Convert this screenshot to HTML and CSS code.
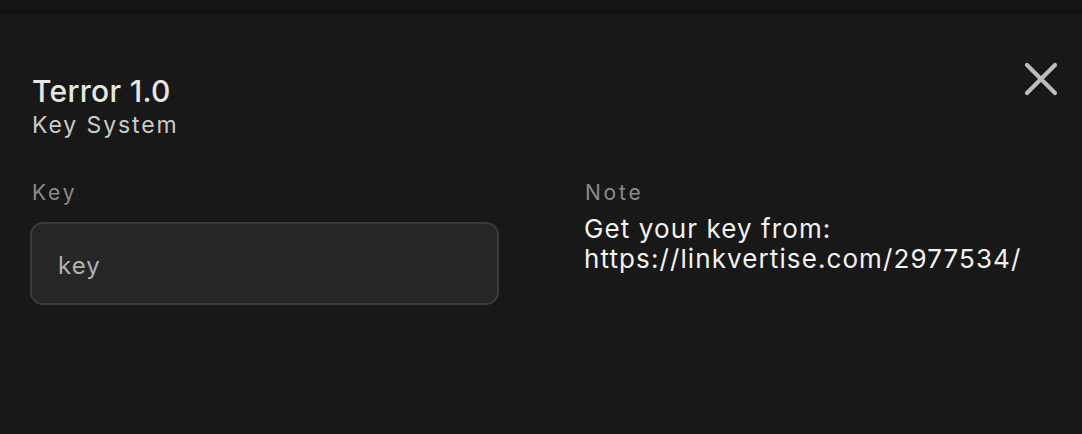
FILE: index.html
```html
<!DOCTYPE html>
<html lang="en">
<head>
<meta charset="utf-8">
<title>Terror 1.0 - Key System</title>
<link rel="stylesheet" href="styles.css">
</head>
<body>
<div class="topbar"></div>
<main class="window">
  <header class="header">
    <div class="titles">
      <h1 class="title">Terror 1.0</h1>
      <p class="subtitle">Key System</p>
    </div>
    <button class="close" aria-label="Close">
      <svg width="34" height="34" viewBox="0 0 34 34" aria-hidden="true">
        <path d="M3 3 L31 31 M31 3 L3 31" stroke="#bdbdbd" stroke-width="4.2" stroke-linecap="round" fill="none"/>
      </svg>
    </button>
  </header>
  <section class="content">
    <div class="col col-key">
      <label class="label" for="key">Key</label>
      <input id="key" class="input" type="text" placeholder="key">
    </div>
    <div class="col col-note">
      <div class="label">Note</div>
      <div class="note">
        <span class="note-line">Get your key from:</span>
        <span class="note-line">https://linkvertise.com/2977534/</span>
      </div>
    </div>
  </section>
</main>
</body>
</html>
```
FILE: styles.css
```css
* { box-sizing: border-box; }
html, body { margin: 0; padding: 0; }
body {
  background: #181818;
  width: 1082px;
  height: 434px;
  overflow: hidden;
  font-family: Inter, "Noto Sans", sans-serif;
}
.topbar {
  height: 14px;
  background: #131313;
}
.window {
  padding: 61px 0 0 30px;
}
.header {
  display: flex;
  justify-content: space-between;
  align-items: flex-start;
}
.titles { padding-left: 2px; }
.title {
  margin: 0;
  font-size: 30px;
  line-height: 32px;
  font-weight: 500;
  letter-spacing: 0.3px;
  color: #e6e6e6;
}
.subtitle {
  margin: 3px 0 0;
  font-size: 23px;
  line-height: 30px;
  font-weight: 400;
  letter-spacing: 1.9px;
  color: #cacaca;
}
.close {
  margin: -13px 24px 0 0;
  padding: 0;
  border: 0;
  background: transparent;
  width: 34px;
  height: 34px;
  display: flex;
}
.content {
  display: flex;
  gap: 84px;
  margin-top: 40px;
}
.col { display: flex; flex-direction: column; }
.col-key { width: 469px; }
.col-note { flex: 1; }
.label {
  padding-left: 2px;
  font-size: 21px;
  line-height: 26px;
  letter-spacing: 2.8px;
  color: #8b8b8b;
}
.input {
  margin-top: 16px;
  width: 469px;
  height: 83px;
  padding: 3px 0 0 26px;
  border: 2px solid #3a3a3a;
  border-radius: 13px;
  background: #262626;
  font-family: inherit;
  font-size: 24px;
  letter-spacing: 1px;
  color: #e0e0e0;
  outline: none;
}
.input::placeholder { color: #b2b2b2; }
.note {
  margin-top: 8px;
  padding-left: 1px;
  display: flex;
  flex-direction: column;
}
.note-line {
  display: block;
  font-size: 26px;
  line-height: 29.5px;
  font-weight: 400;
  letter-spacing: 1.1px;
  color: #f2f2f2;
  white-space: nowrap;
}
```
